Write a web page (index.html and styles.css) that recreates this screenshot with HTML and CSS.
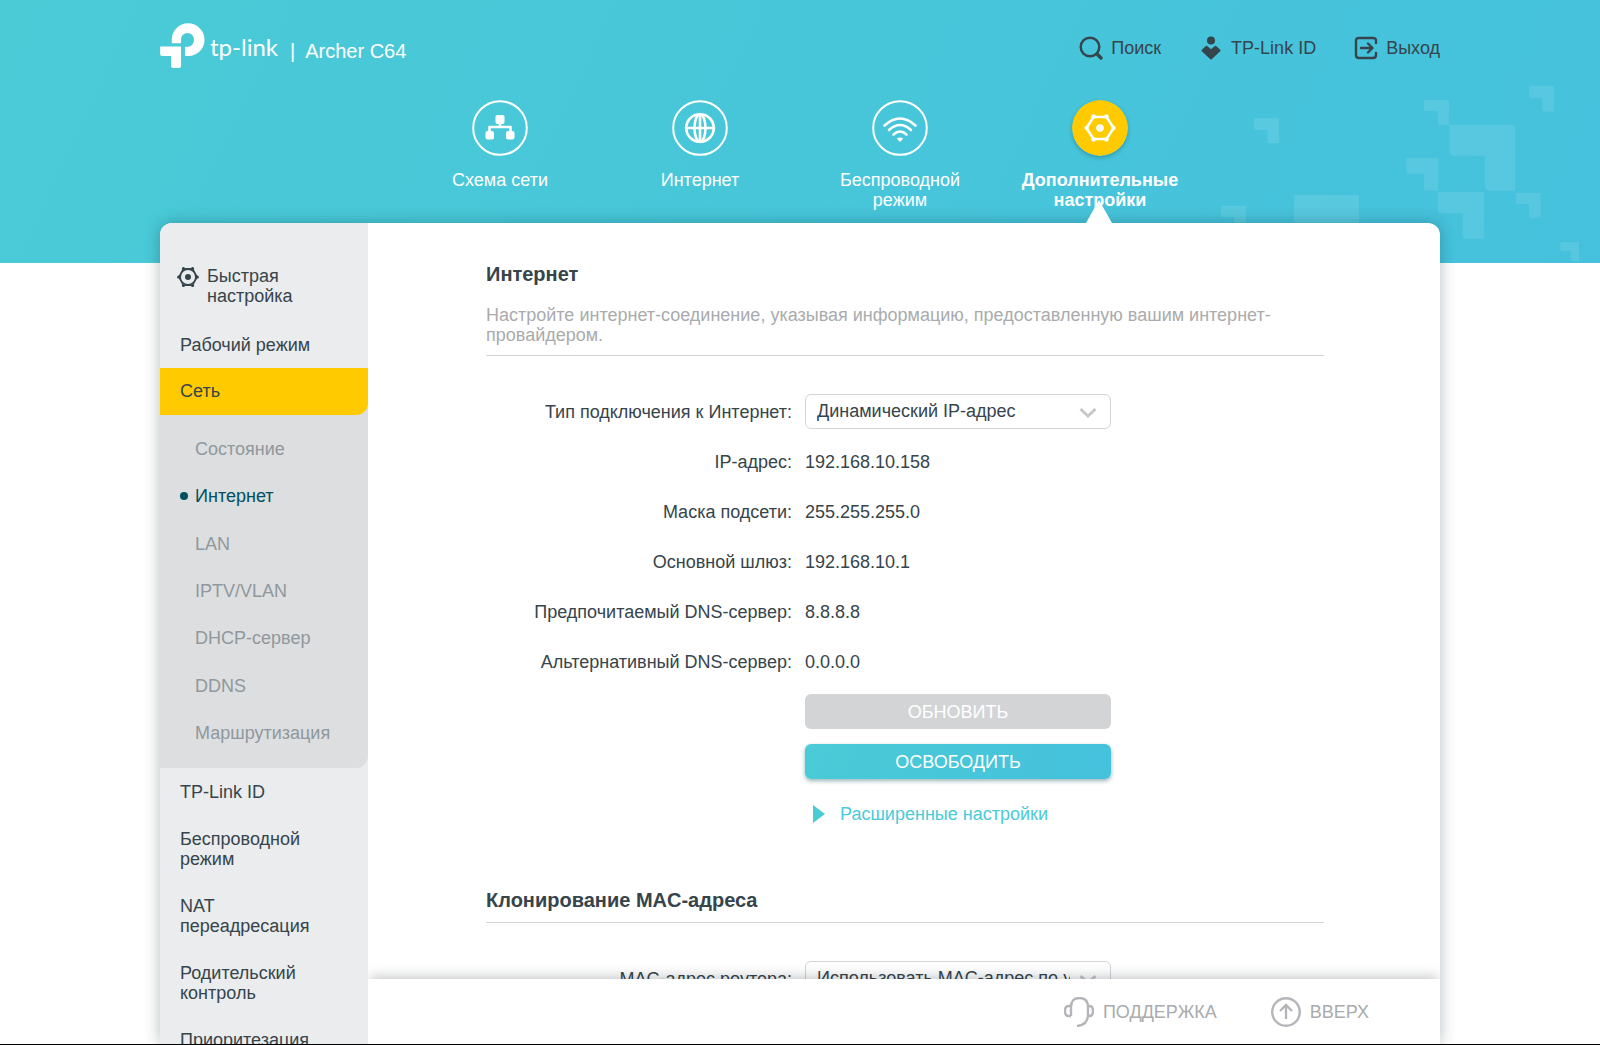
FILE: index.html
```html
<!DOCTYPE html>
<html lang="ru">

<head>
    <meta charset="UTF-8">
    <meta name="viewport" content="width=device-width, initial-scale=1.0">
    <title>Archer C64</title>
    <link rel="stylesheet" href="styles.css">
</head>

<body>
    <header class="banner">
        <svg class="banner-decor" width="420" height="193" viewBox="0 0 1260 579" aria-hidden="true">
            <path d="M222 145h75v75h-28q-7 0-7-7v-33h-33q-7 0-7-7z" />
            <path d="M732 90h75v75h-27q-7 0-7-7v-35h-34q-7 0-7-7z" />
            <path d="M1047 48h75v77h-28q-7 0-7-7v-35h-33q-7 0-7-7z" />
            <path d="M809 164h196v198h-75q-15 0-15-15v-90h-91q-15 0-15-15z" />
            <path d="M679 265h96v97h-35q-8 0-8-8v-43h-45q-8 0-8-8z" />
            <path d="M773 366h139v140h-52q-12 0-12-12v-64h-63q-12 0-12-12z" />
            <path d="M1008 369h74v74h-28q-7 0-7-7v-34h-32q-7 0-7-7z" />
            <path d="M1141 516h56v57h-20q-5 0-5-5v-25h-26q-5 0-5-5z" />
            <path d="M123 408h75v75h-28q-7 0-7-7v-35h-33q-7 0-7-7z" />
            <path d="M342 375h195v198h-75q-15 0-15-15v-90h-90q-15 0-15-15z" />
        </svg>

        <div class="topbar">
            <div class="brand">
                <svg class="brand-mark" width="45" height="45" viewBox="30 38 135 136" aria-hidden="true">
                    <path d="M65 99V88a49.500 49.500 0 1 1 50 50h-10v-28h10a20 20 0 0 0 17-22a19.500 20 0 0 0-39 0v11z" />
                    <path d="M30 109h63v59q0 6-6 6H69q-6 0-6-6v-30H36q-6 0-6-6z" />
                </svg>
                <span class="brand-name">tp-link</span>
                <span class="brand-model"><span class="brand-bar">|</span>Archer C64</span>
            </div>
            <div class="toplinks">
                <a class="toplink" href="#">
                    <svg width="24" height="24" viewBox="0 0 24 24" aria-hidden="true">
                        <circle class="line" cx="11" cy="11" r="9.300" />
                        <path class="line thick" d="M18 18l4 4" />
                    </svg>
                    Поиск
                </a>
                <a class="toplink" href="#">
                    <svg width="24" height="24" viewBox="0 0 24 24" aria-hidden="true">
                        <circle cx="12" cy="4.500" r="4" />
                        <path class="solid" d="M3.500 14.500L7.500 10.800L12 14.500L16.500 10.800L20.500 14.500L12 22.500z" />
                    </svg>
                    TP-Link ID
                </a>
                <a class="toplink" href="#">
                    <svg width="24" height="24" viewBox="0 0 24 24" aria-hidden="true">
                        <path class="line" d="M22 7V5q0-3-3-3H5Q2 2 2 5v14q0 3 3 3h14q3 0 3-3v-2M7 12h11M14 7.500l4.500 4.500l-4.500 4.500" />
                    </svg>
                    Выход
                </a>
            </div>
        </div>

        <nav class="mainnav">
            <a class="mainnav-item" href="#">
                <svg width="56" height="56" viewBox="0 0 56 56" aria-hidden="true">
                    <circle class="ring" cx="28" cy="28" r="26.800" />
                    <path class="stroke" d="M28 22v5M17.500 33v-6h21v6" />
                    <rect x="23.500" y="15" width="9" height="9" rx="2" />
                    <rect x="13.500" y="31" width="8.500" height="8.500" rx="2" />
                    <rect x="34" y="31" width="8.500" height="8.500" rx="2" />
                </svg>
                Схема сети
            </a>
            <a class="mainnav-item" href="#">
                <svg width="56" height="56" viewBox="0 0 56 56" aria-hidden="true">
                    <circle class="ring" cx="28" cy="28" r="26.800" />
                    <circle class="stroke" cx="28" cy="28" r="13.800" />
                    <ellipse class="stroke" cx="28" cy="28" rx="5.500" ry="13.800" />
                    <path class="stroke" d="M28 14v28M14 28h28" />
                </svg>
                Интернет
            </a>
            <a class="mainnav-item" href="#">
                <svg width="56" height="56" viewBox="0 0 56 56" aria-hidden="true">
                    <circle class="ring" cx="28" cy="28" r="26.800" />
                    <path class="stroke" d="M12.500 25.500Q28 11.500 43.500 25.500M17 30Q28 20 39 30M21.500 34.500Q28 28.500 34.500 34.500" />
                    <path d="M24.800 38.500Q28 36.500 31.200 38.500L28 42z" />
                </svg>
                Беспроводной режим
            </a>
            <a class="mainnav-item active" href="#">
                <svg width="56" height="56" viewBox="0 0 56 56" aria-hidden="true">
                    <circle class="disc" cx="28" cy="28" r="28" />
                    <path class="stroke" d="M21.500 17h13l7 11l-7 11h-13l-7-11z" />
                    <circle class="disc" cx="28" cy="28" r="9.500" />
                    <circle cx="28" cy="28" r="3.800" />
                    <circle cx="21.500" cy="16.500" r="2.200" />
                    <circle cx="34.500" cy="16.500" r="2.200" />
                    <circle cx="21.500" cy="39.500" r="2.200" />
                    <circle cx="34.500" cy="39.500" r="2.200" />
                    <circle cx="14.500" cy="28" r="2.200" />
                    <circle cx="41.500" cy="28" r="2.200" />
                </svg>
                Дополнительные настройки
            </a>
        </nav>
    </header>

    <main class="panel">
        <nav class="sidebar">
            <a class="side-item quick" href="#">
                <svg width="24" height="22" viewBox="0 0 24 24" aria-hidden="true">
                    <path class="line thin" d="M7 3h10l5 9l-5 9H7l-5-9z" />
                    <circle class="line thin" cx="12" cy="12" r="8.500" />
                    <circle cx="12" cy="12" r="3.300" />
                    <circle cx="7" cy="2.800" r="1.700" />
                    <circle cx="17" cy="2.800" r="1.700" />
                    <circle cx="7" cy="21.200" r="1.700" />
                    <circle cx="17" cy="21.200" r="1.700" />
                    <circle cx="1.800" cy="12" r="1.700" />
                    <circle cx="22.200" cy="12" r="1.700" />
                </svg>
                <span>Быстрая настройка</span>
            </a>
            <a class="side-item" href="#">Рабочий режим</a>
            <div class="side-group">
                <a class="side-item current" href="#">Сеть</a>
                <div class="submenu">
                    <a class="sub-item" href="#">Состояние</a>
                    <a class="sub-item selected" href="#">Интернет</a>
                    <a class="sub-item" href="#">LAN</a>
                    <a class="sub-item" href="#">IPTV/VLAN</a>
                    <a class="sub-item" href="#">DHCP-сервер</a>
                    <a class="sub-item" href="#">DDNS</a>
                    <a class="sub-item" href="#">Маршрутизация</a>
                </div>
            </div>
            <a class="side-item" href="#">TP-Link ID</a>
            <a class="side-item" href="#">Беспроводной режим</a>
            <a class="side-item" href="#">NAT переадресация</a>
            <a class="side-item" href="#">Родительский контроль</a>
            <a class="side-item" href="#">Приоритезация</a>
        </nav>

        <div class="content">
            <div class="scroll">
                <section class="section">
                    <h2 class="with-text">Интернет</h2>
                    <p class="description">Настройте интернет-соединение, указывая информацию, предоставленную вашим интернет-провайдером.</p>
                    <div class="fields">
                        <div class="field">
                            <label for="connType">Тип подключения к Интернет:</label>
                            <div class="select-box">
                                <select id="connType">
                                    <option>Динамический IP-адрес</option>
                                </select>
                                <svg width="18" height="12" viewBox="0 0 18 12" aria-hidden="true"><path d="M1.500 2L9 9l7.500-7" /></svg>
                            </div>
                        </div>
                        <div class="field"><span class="name">IP-адрес:</span><span class="value">192.168.10.158</span></div>
                        <div class="field"><span class="name">Маска подсети:</span><span class="value">255.255.255.0</span></div>
                        <div class="field"><span class="name">Основной шлюз:</span><span class="value">192.168.10.1</span></div>
                        <div class="field"><span class="name">Предпочитаемый DNS-сервер:</span><span class="value">8.8.8.8</span></div>
                        <div class="field"><span class="name">Альтернативный DNS-сервер:</span><span class="value">0.0.0.0</span></div>
                        <div class="field"><button class="btn" type="button" disabled>ОБНОВИТЬ</button></div>
                        <div class="field"><button class="btn primary" type="button">ОСВОБОДИТЬ</button></div>
                        <div class="field">
                            <button class="advanced" type="button">
                                <svg width="12" height="18" viewBox="0 0 12 18" aria-hidden="true"><path d="M0 0l12 9l-12 9z" /></svg>
                                Расширенные настройки
                            </button>
                        </div>
                    </div>
                </section>

                <section class="section">
                    <h2>Клонирование MAC-адреса</h2>
                    <div class="fields">
                        <div class="field">
                            <label for="macType">MAC-адрес роутера:</label>
                            <div class="select-box">
                                <select id="macType">
                                    <option>Использовать MAC-адрес по умолчанию</option>
                                </select>
                                <svg width="18" height="12" viewBox="0 0 18 12" aria-hidden="true"><path d="M1.500 2L9 9l7.500-7" /></svg>
                            </div>
                        </div>
                    </div>
                </section>
            </div>

            <footer class="footer">
                <a class="footer-link" href="#">
                    <svg width="30" height="30" viewBox="0 0 30 30" aria-hidden="true">
                        <path d="M7 19V10Q7 1 15.500 1Q24 1 24 10v9Q23 28 13 29M7 9H4.500Q1 9 1 14t3.500 5H7M24 9h1.500Q29 9 29 14t-3.500 5H24" />
                    </svg>
                    ПОДДЕРЖКА
                </a>
                <a class="footer-link" href="#">
                    <svg width="30" height="30" viewBox="0 0 30 30" aria-hidden="true">
                        <circle cx="15" cy="15" r="13.800" />
                        <path d="M15 22V9M9 14l6-6l6 6" />
                    </svg>
                    ВВЕРХ
                </a>
            </footer>
        </div>
    </main>
</body>

</html>
```
FILE: styles.css
```css
* {
    box-sizing: border-box;
}

body {
    margin: 0;
    height: 100vh;
    display: flex;
    flex-direction: column;
    overflow: hidden;
    border-bottom: 1px solid #000;
    background: #fff;
    color: #36444b;
    font-family: "Liberation Sans", Arial, sans-serif;
    font-size: 18px;
    line-height: 20px;
}

a {
    color: inherit;
    text-decoration: none;
}

/* Blue banner */
.banner {
    position: relative;
    flex: none;
    height: 263px;
    padding: 0 10%;
    background: linear-gradient(115deg, #4acbd6, #45c1dd);
}

.banner-decor {
    position: absolute;
    right: 0;
    bottom: 0;
    fill: rgba(255, 255, 255, 0.1);
}

.topbar {
    display: flex;
    justify-content: space-between;
    height: 100px;
}

.brand {
    display: flex;
    align-items: flex-start;
    padding-top: 23px;
    color: #fff;
}

.brand-mark {
    fill: #fff;
}

.brand-name {
    margin: 14px 0 0 5px;
    font-family: Lato, sans-serif;
    font-size: 24px;
}

.brand-model {
    margin: 18px 0 0 12px;
    font-size: 20px;
}

.brand-bar {
    margin-right: 10px;
}

.toplinks {
    display: flex;
    gap: 38px;
    padding-top: 36px;
}

.toplink {
    display: flex;
    height: 24px;
    gap: 8px;
    align-items: center;
}

.toplink svg,
.quick svg {
    flex: none;
    fill: #36444b;
}

.line {
    fill: none;
    stroke: #36444b;
    stroke-width: 2.4;
    stroke-linecap: round;
    stroke-linejoin: round;
}

.line.thick {
    stroke-width: 3.4;
}

.line.thin {
    stroke-width: 1.6;
}

.solid {
    stroke: #36444b;
    stroke-width: 2;
    stroke-linejoin: round;
}

/* Round icon navigation */
.mainnav {
    display: grid;
    grid-template-columns: repeat(4, 200px);
    justify-content: center;
}

.mainnav-item {
    position: relative;
    display: flex;
    flex-direction: column;
    align-items: center;
    gap: 14px;
    padding: 0 20px;
    color: #fff;
    text-align: center;
}

.mainnav-item svg {
    flex: none;
    fill: #fff;
}

.mainnav-item .ring {
    fill: none;
    stroke: #fff;
    stroke-width: 2;
}

.mainnav-item .stroke {
    fill: none;
    stroke: #fff;
    stroke-width: 2.6;
    stroke-linecap: round;
    stroke-linejoin: round;
}

.mainnav-item .disc {
    fill: #ffcb00;
}

.mainnav-item.active {
    font-weight: bold;
}

.mainnav-item.active svg {
    border-radius: 50%;
    box-shadow: 0 2px 4px rgba(0, 60, 80, 0.3);
}

.mainnav-item.active::after {
    content: "";
    position: absolute;
    top: 100px;
    left: 50%;
    margin-left: -14px;
    border: 13px solid transparent;
    border-top: 0;
    border-bottom: 23px solid #fff;
    z-index: 2;
}

/* White panel */
.panel {
    position: relative;
    flex: 1;
    min-height: 0;
    display: flex;
    width: 80%;
    margin: -40px auto 0;
    border-radius: 12px 12px 0 0;
    background: #fff;
    box-shadow: 0 0 16px rgba(0, 40, 50, 0.3);
}

.sidebar {
    flex: none;
    width: 208px;
    padding-top: 29px;
    overflow: hidden;
    border-radius: 12px 0 0 0;
    background: #eaecee;
}

.side-item {
    display: block;
    padding: 14px 40px 13px 20px;
}

.side-item.quick {
    display: flex;
    gap: 7px;
    margin-bottom: 2px;
    padding-left: 16px;
}

.side-group {
    background: #dddee0;
    border-radius: 0 0 12px 0;
}

.side-item.current {
    padding: 13px 20px 14px;
    border-radius: 0 0 12px 0;
    background: #ffcb00;
}

.submenu {
    display: flex;
    flex-direction: column;
    justify-content: space-between;
    min-height: 353px;
    padding: 11px 0;
    color: #8f989c;
}

.sub-item {
    padding: 13px 0 14px 35px;
}

.sub-item.selected {
    display: flex;
    align-items: center;
    gap: 7px;
    padding-left: 20px;
    color: #00505f;
}

.sub-item.selected::before {
    content: "";
    width: 8px;
    height: 8px;
    border-radius: 50%;
    background: #00505f;
}

.content {
    flex: 1;
    min-width: 0;
    display: flex;
    flex-direction: column;
}

.scroll {
    flex: 1;
    min-height: 0;
    overflow: hidden;
    padding: 37px 116px 0 118px;
}

.section {
    margin-bottom: 50px;
}

h2 {
    margin: 0;
    padding-bottom: 8px;
    border-bottom: 1px solid #d2d4d6;
    font-size: 20px;
    line-height: 28px;
}

h2.with-text {
    border-bottom: 0;
    padding-bottom: 17px;
}

.description {
    margin: 0;
    padding-bottom: 10px;
    border-bottom: 1px solid #d2d4d6;
    color: #a9abad;
}

.fields {
    padding-top: 30px;
}

.field {
    display: grid;
    grid-template-columns: 306px 306px;
    column-gap: 13px;
    align-items: center;
    height: 50px;
}

.field label,
.field .name,
.field .value {
    padding-top: 2px;
    white-space: nowrap;
}

.field label,
.field .name {
    text-align: right;
}

.select-box {
    position: relative;
}

select {
    appearance: none;
    width: 100%;
    height: 35px;
    padding: 0 40px 0 11px;
    border: 1px solid #d2d4d6;
    border-radius: 6px;
    background: #fff;
    color: inherit;
    font: inherit;
}

.select-box svg {
    position: absolute;
    top: 13px;
    right: 14px;
    fill: none;
    stroke: #c6c7c9;
    stroke-width: 3;
    pointer-events: none;
}

.btn {
    grid-column: 2;
    height: 35px;
    padding: 2px 0 0;
    border: 0;
    border-radius: 6px;
    background: #d2d4d6;
    color: #fff;
    font: inherit;
}

.btn.primary {
    background: linear-gradient(115deg, #4acbd6, #45c1dd);
    box-shadow: 0 2px 4px rgba(0, 70, 80, 0.4);
}

.advanced {
    grid-column: 2;
    display: flex;
    align-items: center;
    gap: 15px;
    padding: 6px 0 0 8px;
    border: 0;
    background: none;
    color: #4acbd6;
    font: inherit;
}

.advanced svg {
    fill: #4acbd6;
}

/* Bottom bar */
.footer {
    position: relative;
    flex: none;
    display: flex;
    justify-content: flex-end;
    align-items: center;
    gap: 54px;
    height: 65px;
    padding-right: 71px;
    background: #fff;
    box-shadow: 0 -4px 12px -2px rgba(0, 20, 30, 0.25);
    clip-path: inset(-20px 0 0 0);
    color: #a9abad;
}

.footer-link {
    display: flex;
    align-items: center;
    gap: 9px;
}

.footer-link svg {
    fill: none;
    stroke: #b4b5b8;
    stroke-width: 2.4;
}
```
